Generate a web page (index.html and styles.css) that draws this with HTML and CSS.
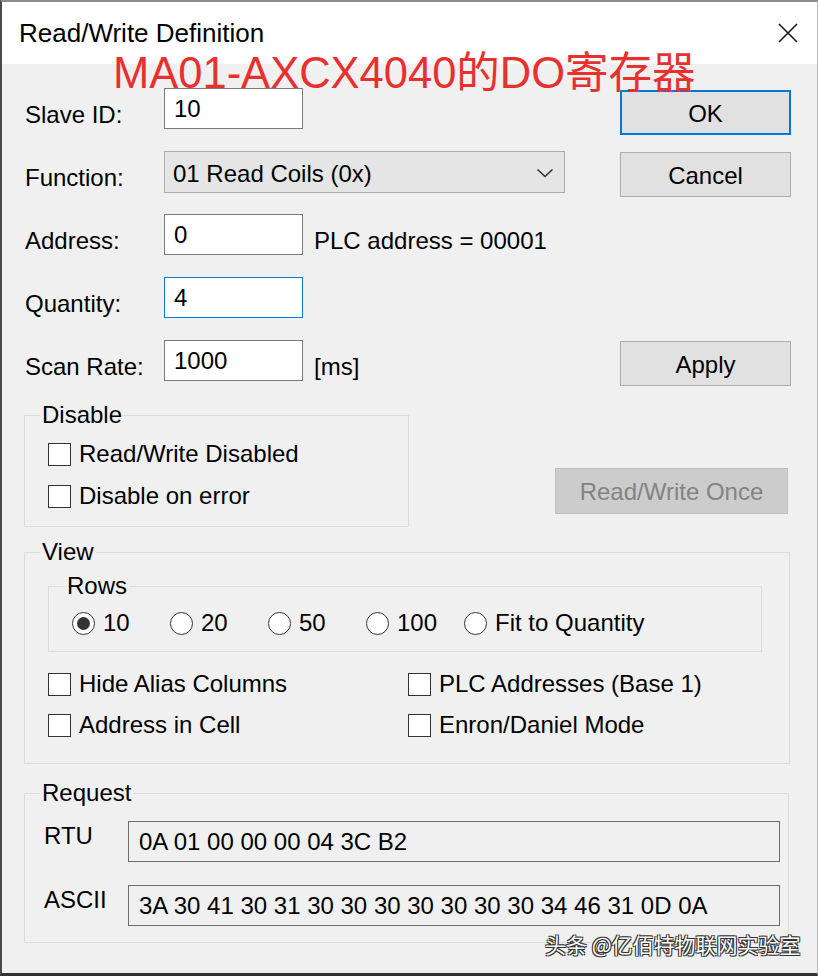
FILE: index.html
```html
<!DOCTYPE html>
<html lang="en">
<head>
    <meta charset="UTF-8">
    <title>Read/Write Definition</title>
    <link rel="stylesheet" href="styles.css">
</head>
<body>

<div class="dialog">

    <!-- title bar -->
    <div class="titlebar">
        <span class="title">Read/Write Definition</span>
        <svg class="close" width="22" height="22" viewBox="0 0 22 22">
            <path d="M2 2 L20 20 M20 2 L2 20" stroke="#1a1a1a" stroke-width="1.6" fill="none"/>
        </svg>
    </div>

    <!-- red note pasted on top of the screenshot -->
    <div class="note">MA01-AXCX4040的DO寄存器</div>

    <div class="content">

        <div class="form-grid">
            <div class="label">Slave ID:</div>
            <div class="field"><div class="textbox">10</div></div>
            <div class="btn btn-default">OK</div>

            <div class="label">Function:</div>
            <div class="field">
                <div class="select">
                    <span>01 Read Coils (0x)</span>
                    <svg width="18" height="10" viewBox="0 0 18 10">
                        <path d="M1.5 1.5 L9 8.5 L16.5 1.5" stroke="#333" stroke-width="1.6" fill="none"/>
                    </svg>
                </div>
            </div>
            <div class="btn">Cancel</div>

            <div class="label">Address:</div>
            <div class="field"><div class="textbox">0</div><span class="after">PLC address = 00001</span></div>
            <div></div>

            <div class="label">Quantity:</div>
            <div class="field"><div class="textbox focused">4</div></div>
            <div></div>

            <div class="label">Scan Rate:</div>
            <div class="field"><div class="textbox">1000</div><span class="after">[ms]</span></div>
            <div class="btn">Apply</div>
        </div>

        <!-- Disable -->
        <div class="disable-row">
            <fieldset class="group group-disable">
                <legend>Disable</legend>
                <div class="group-body stack">
                    <div class="check"><span class="box"></span>Read/Write Disabled</div>
                    <div class="check"><span class="box"></span>Disable on error</div>
                </div>
            </fieldset>
            <div class="btn btn-disabled">Read/Write Once</div>
        </div>

        <!-- View -->
        <fieldset class="group group-view">
            <legend>View</legend>
            <div class="group-body view-body">
                <fieldset class="group group-rows">
                    <legend>Rows</legend>
                    <div class="rows-body">
                        <div class="radio"><span class="dot checked"></span>10</div>
                        <div class="radio"><span class="dot"></span>20</div>
                        <div class="radio"><span class="dot"></span>50</div>
                        <div class="radio"><span class="dot"></span>100</div>
                        <div class="radio"><span class="dot"></span>Fit to Quantity</div>
                    </div>
                </fieldset>
                <div class="check-grid">
                    <div class="check"><span class="box"></span>Hide Alias Columns</div>
                    <div class="check"><span class="box"></span>PLC Addresses (Base 1)</div>
                    <div class="check"><span class="box"></span>Address in Cell</div>
                    <div class="check"><span class="box"></span>Enron/Daniel Mode</div>
                </div>
            </div>
        </fieldset>

        <!-- Request -->
        <fieldset class="group group-request">
            <legend>Request</legend>
            <div class="request-body">
                <div class="req-label">RTU</div>
                <div class="req-field">0A 01 00 00 00 04 3C B2</div>
                <div class="req-label">ASCII</div>
                <div class="req-field">3A 30 41 30 31 30 30 30 30 30 30 30 34 46 31 0D 0A</div>
            </div>
        </fieldset>

    </div>

    <div class="watermark">头条 @亿佰特物联网实验室</div>
</div>

</body>
</html>
```

FILE: styles.css
```css
body, html {
    margin: 0;
    padding: 0;
}

body {
    font-family: "Liberation Sans", Arial, sans-serif;
    font-size: 24px;
    color: #000;
}

.dialog {
    position: relative;
    width: 818px;
    height: 976px;
    box-sizing: border-box;
    background: #f0f0f0;
    border-top: 2px solid #8c8c8c;
    border-left: 2px solid #4a4a4a;
    border-right: 1px solid #b9b9b9;
    border-bottom: 3px solid #333;
    overflow: hidden;
}

/* 标题栏 */
.titlebar {
    height: 62px;
    background: #fff;
    display: flex;
    align-items: center;
    justify-content: space-between;
    padding: 0 18px 0 17px;
}

.title {
    font-size: 26px;
}

.note {
    position: absolute;
    left: 111px;
    top: 49px;
    font-size: 43.5px;
    line-height: 44px;
    color: #e8312f;
    font-family: "Liberation Sans", "Noto Sans CJK SC", sans-serif;
    white-space: nowrap;
}

.content {
    padding: 24px 25px 0 22px;
}

/* 上半部分表单 */
.form-grid {
    display: grid;
    grid-template-columns: 140px 456px 171px;
    grid-auto-rows: 41px;
    row-gap: 22px;
}

.label {
    padding-top: 15px;
    line-height: 24px;
    padding-left: 1px;
}

.field {
    display: flex;
    align-items: flex-start;
}

.textbox {
    width: 139px;
    height: 41px;
    box-sizing: border-box;
    background: #fff;
    border: 1px solid #7a7a7a;
    padding: 0 9px;
    line-height: 39px;
}

.textbox.focused {
    border-color: #0078d7;
}

.after {
    margin-left: 11px;
    padding-top: 15px;
    line-height: 24px;
}

.select {
    width: 401px;
    height: 42px;
    box-sizing: border-box;
    background: #e5e5e5;
    border: 1px solid #adadad;
    display: flex;
    align-items: center;
    justify-content: space-between;
    padding: 4px 10px 0 8px;
}

.select svg {
    margin-top: -3px;
}

.btn {
    height: 45px;
    margin-top: 1px;
    box-sizing: border-box;
    background: #e1e1e1;
    border: 1px solid #adadad;
    display: flex;
    align-items: center;
    justify-content: center;
    padding-top: 2px;
}

.btn-default {
    margin-top: 2px;
    border: 2px solid #0078d7;
}

.btn-disabled {
    background: #cccccc;
    border-color: #bfbfbf;
    color: #838383;
    width: 233px;
    height: 46px;
    margin: 64px 4px 0 auto;
}

/* 分组框 */
.group {
    margin: 0;
    padding: 0;
    border: 1px solid #dcdcdc;
    min-width: 0;
}

.group legend {
    margin-left: 15px;
    padding: 0 2px;
    line-height: 22px;
}

.disable-row {
    display: flex;
    margin-top: 23px;
}

.group-disable {
    width: 385px;
    box-sizing: border-box;
}

.group-body {
    padding: 13px 0 15px 23px;
}

.stack {
    display: flex;
    flex-direction: column;
    gap: 12px;
}

.check {
    display: flex;
    align-items: center;
    height: 30px;
}

.box {
    width: 23px;
    height: 23px;
    box-sizing: border-box;
    border: 1px solid #333;
    background: #fff;
    margin-right: 8px;
}

.group-view {
    margin-top: 14px;
    margin-right: 2px;
}

.view-body {
    padding: 12px 27px 23px 23px;
}

.group-rows legend {
    margin-left: 16px;
}

.rows-body {
    display: flex;
    padding: 13px 0 15px 23px;
}

.radio {
    width: 98px;
    height: 26px;
    display: flex;
    align-items: center;
}

.radio:last-child {
    width: auto;
}

.dot {
    width: 23px;
    height: 23px;
    box-sizing: border-box;
    border: 1px solid #333;
    border-radius: 50%;
    background: #fff;
    margin-right: 8px;
    display: flex;
    align-items: center;
    justify-content: center;
}

.dot.checked::after {
    content: "";
    width: 13px;
    height: 13px;
    border-radius: 50%;
    background: #333;
}

.check-grid {
    display: grid;
    grid-template-columns: 360px 1fr;
    row-gap: 11px;
    margin-top: 17px;
}

.group-request {
    margin-top: 18px;
    margin-right: 3px;
}

.request-body {
    display: grid;
    grid-template-columns: 84px 1fr;
    grid-auto-rows: 41px;
    row-gap: 23px;
    padding: 17px 8px 16px 19px;
}

.req-label {
    line-height: 24px;
    padding-top: 3px;
}

.req-field {
    box-sizing: border-box;
    border: 1px solid #6e6e6e;
    background: #f0f0f0;
    padding: 0 10px;
    line-height: 39px;
}

/* 右下角水印 */
.watermark {
    position: absolute;
    left: 543px;
    top: 929px;
    font-family: "Noto Sans CJK SC", sans-serif;
    font-size: 21px;
    line-height: 26px;
    color: #fff;
    text-shadow: 1px 1px 0 #333, -1px -1px 0 #333, 1px -1px 0 #333, -1px 1px 0 #333;
    white-space: nowrap;
}
```
